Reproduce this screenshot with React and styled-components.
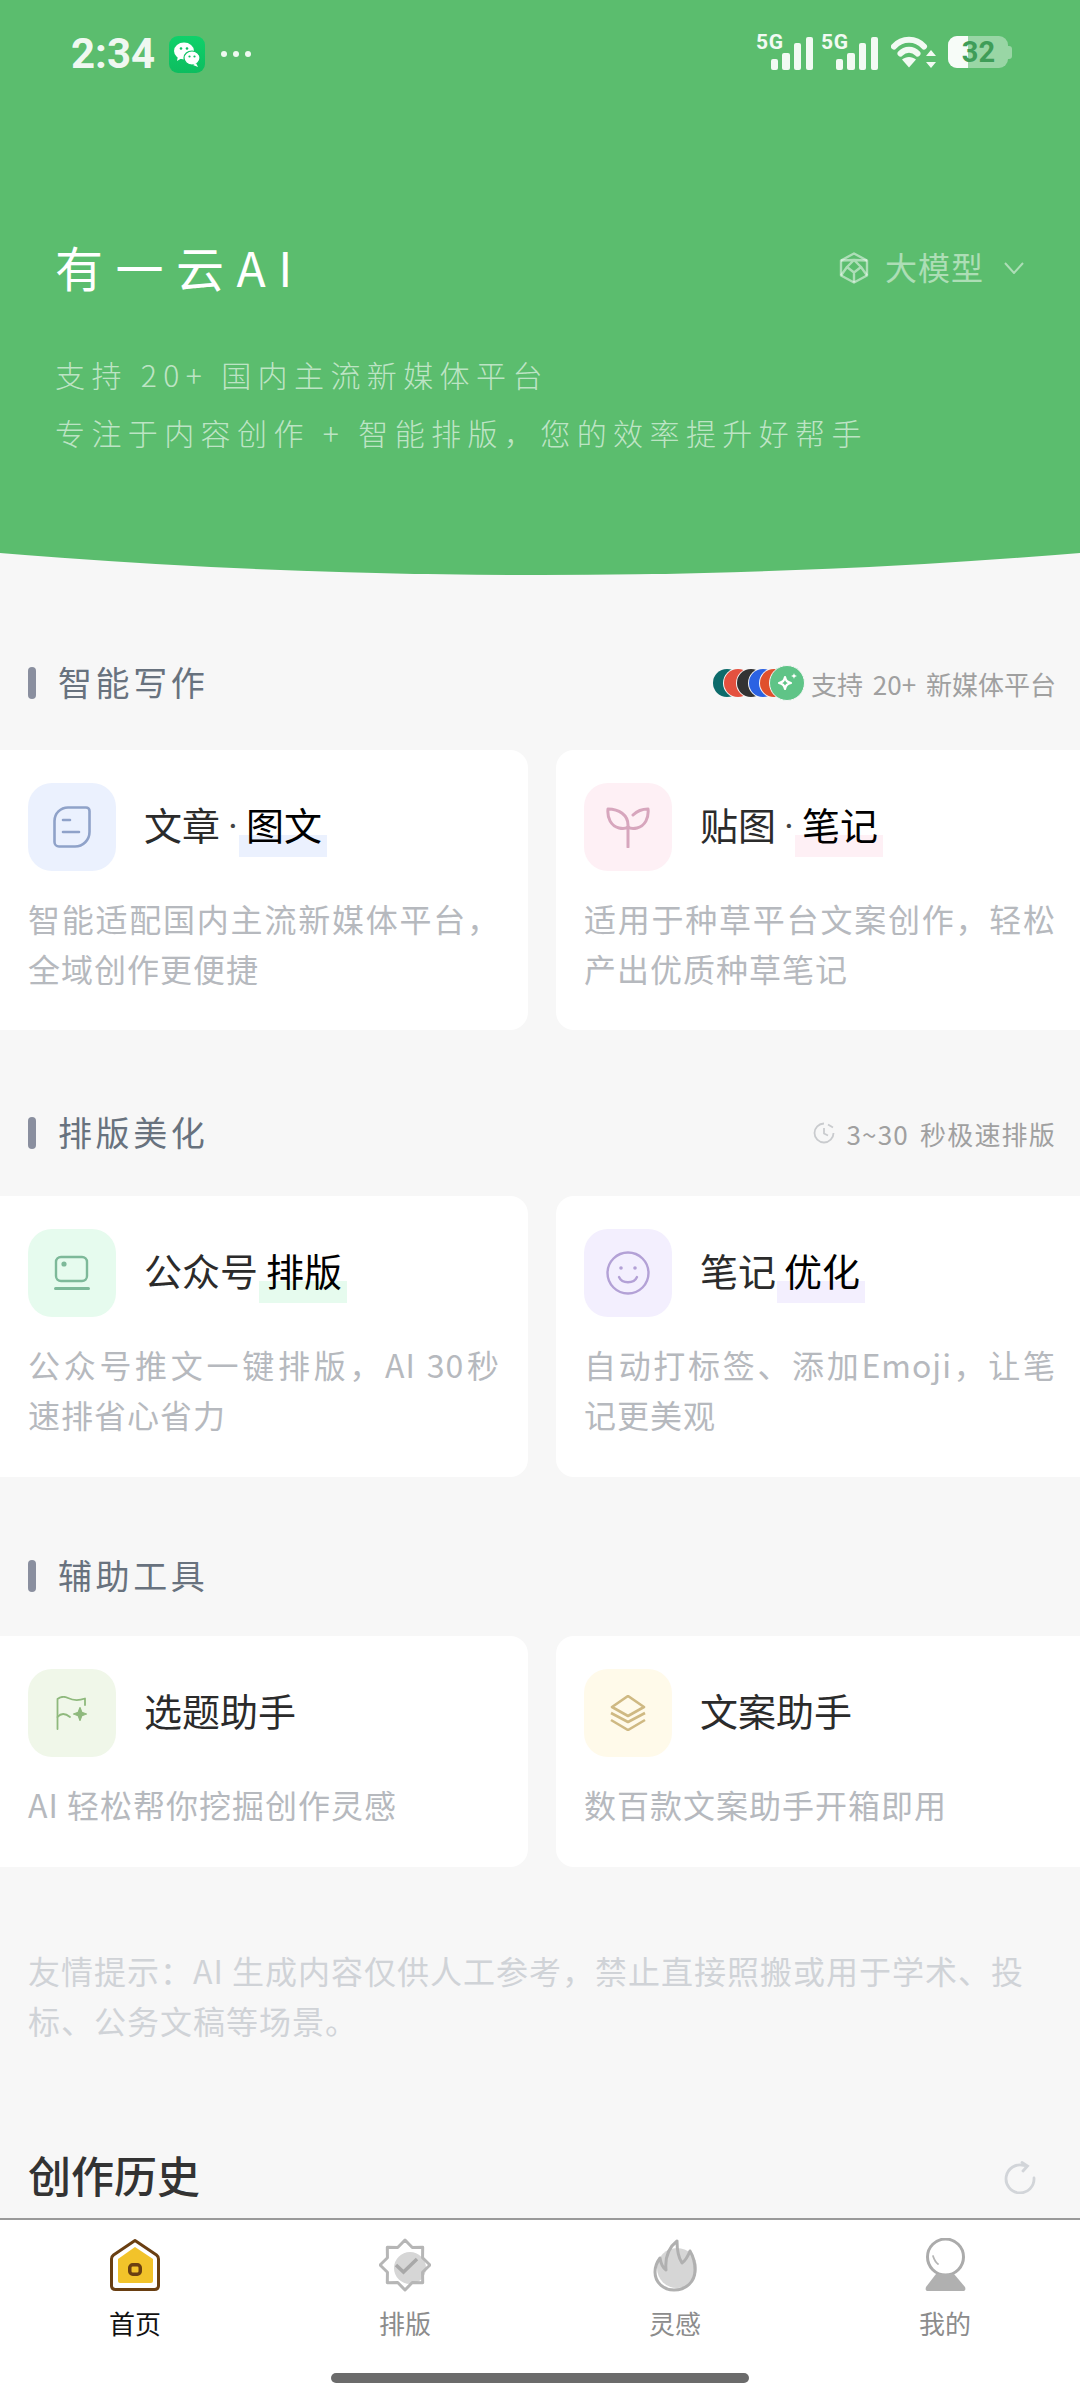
import React from "react";
import styled, { createGlobalStyle } from "styled-components";

const Global = createGlobalStyle`
  html, body { margin: 0; padding: 0; background: #f7f7f7; }
  * { box-sizing: border-box; }
`;

const FONT = `"Noto Sans CJK SC", "Noto Sans", sans-serif`;

const Page = styled.div`
  width: 1080px;
  height: 2400px;
  overflow: hidden;
  display: flex;
  flex-direction: column;
  background: #f7f7f7;
  font-family: ${FONT};
`;
const Scroll = styled.main`
  flex: 1;
  min-height: 0;
  overflow: hidden;
`;
const Hero = styled.header`
  height: 575px;
  background: #5bbd6e;
  clip-path: ellipse(1970px 575px at 50% 0);
  color: #fff;
`;
const StatusBar = styled.div`
  height: 108px;
  display: flex;
  align-items: center;
  padding: 0 68px 0 71px;
`;
const Time = styled.span`
  font-family: Roboto, sans-serif;
  font-size: 42px;
  font-weight: 700;
  line-height: 1;
  color: rgba(255, 255, 255, 0.92);
  margin-right: 14px;
`;
const AppBadge = styled.span`
  width: 36px;
  height: 37px;
  border-radius: 9px;
  background: linear-gradient(180deg, #0fd16a, #0dbd5f);
  display: flex;
  align-items: center;
  justify-content: center;
  margin-right: 16px;
`;
const Dots = styled.span`
  display: flex;
  gap: 6px;
  i {
    width: 6px;
    height: 6px;
    border-radius: 50%;
    background: rgba(255, 255, 255, 0.9);
  }
`;
const StatusRight = styled.div`
  margin-left: auto;
  margin-bottom: 4px;
  display: flex;
  align-items: center;
  gap: 7px;
`;
const SignalSvg = styled.svg`
  width: 58px;
  height: 44px;
  margin-top: -6px;
`;
const Battery = styled.span`
  position: relative;
  width: 60px;
  height: 32px;
  border-radius: 9px;
  background: rgba(255, 255, 255, 0.38);
  overflow: hidden;
  display: flex;
  align-items: center;
  justify-content: center;
  margin-left: 4px;
  font-family: Roboto, sans-serif;
  font-weight: 700;
  font-size: 29px;
  line-height: 1;
  color: #3f9d58;
  padding-left: 1px;
  &::before {
    content: "";
    position: absolute;
    left: 0;
    top: 0;
    bottom: 0;
    width: 20px;
    background: rgba(255, 255, 255, 0.92);
  }
  span { position: relative; }
`;
const BatteryNub = styled.span`
  width: 4px;
  height: 13px;
  border-radius: 0 3px 3px 0;
  background: rgba(255, 255, 255, 0.38);
  margin-left: -7px;
`;
const HeroRow = styled.div`
  margin-top: 130px;
  height: 60px;
  padding: 0 56px 0 55px;
  display: flex;
  align-items: center;
  justify-content: space-between;
`;
const Brand = styled.h1`
  margin: 0;
  font-size: 48px;
  line-height: 60px;
  padding-bottom: 4px;
  font-weight: 400;
  letter-spacing: 12.5px;
  color: #fff;
`;
const ModelPicker = styled.div`
  display: flex;
  align-items: center;
  font-size: 32px;
  font-weight: 400;
  letter-spacing: 1px;
  color: rgba(255, 255, 255, 0.5);
  span { padding-bottom: 4px; }
  svg:first-child { margin-right: 16px; }
  svg:last-child { margin-left: 20px; }
`;
const HeroSub = styled.p`
  margin: 47px 0 0;
  padding-left: 55px;
  font-size: 30px;
  line-height: 58px;
  font-weight: 300;
  letter-spacing: 6.4px;
  color: rgba(255, 255, 255, 0.62);
  white-space: nowrap;
`;

const SectionHead = styled.div`
  height: 40px;
  margin-top: ${(p) => p.$top}px;
  margin-bottom: ${(p) => p.$gap}px;
  padding: 0 24px 0 28px;
  display: flex;
  align-items: center;
`;
const Bar = styled.i`
  width: 8px;
  height: 32px;
  border-radius: 4px;
  background: #8a8f9f;
  margin-right: 22px;
`;
const SectionTitle = styled.h2`
  margin: 0;
  padding-bottom: 4px;
  font-size: 34px;
  font-weight: 400;
  letter-spacing: 3.6px;
  color: #68727e;
`;
const Meta = styled.div`
  margin-left: auto;
  display: flex;
  align-items: center;
  font-size: 26px;
  letter-spacing: ${(p) => p.$ls}px;
  word-spacing: 4px;
  color: #a0a0a0;
  white-space: nowrap;
`;
const Stack = styled.span`
  display: flex;
  align-items: center;
  margin-right: 6px;
`;
const Chip = styled.span`
  width: 28px;
  height: 28px;
  border-radius: 50%;
  background: ${(p) => p.$bg};
  margin-left: ${(p) => p.$shift}px;
  box-shadow: 0 0 0 1px #f7f7f7;
  color: #fff;
  display: flex;
  align-items: center;
  justify-content: flex-end;
  padding-right: 3px;
  &::after {
    content: "";
    width: 4px;
    height: 13px;
    border-left: 2px solid rgba(255, 255, 255, 0.85);
  }
`;
const LeadChip = styled.span`
  position: relative;
  width: 36px;
  height: 36px;
  border-radius: 50%;
  background: #5fc487;
  border: 1px solid #f7f7f7;
  margin-left: -19px;
  display: flex;
  align-items: center;
  justify-content: center;
`;
const Row = styled.div`
  display: grid;
  grid-template-columns: 528px 552px;
  column-gap: 28px;
  width: 1108px;
`;
const Card = styled.article`
  background: #fff;
  padding: 33px 28px 0;
  height: ${(p) => p.$h}px;
  border-radius: ${(p) => (p.$right ? "18px 0 0 18px" : "0 18px 18px 0")};
`;
const CardHead = styled.div`
  display: flex;
  align-items: center;
  gap: 28px;
  margin-bottom: 22px;
`;
const IconBox = styled.div`
  width: 88px;
  height: 88px;
  flex: none;
  border-radius: 24px;
  background: ${(p) => p.$bg};
  display: flex;
  align-items: center;
  justify-content: center;
`;
const CardTitle = styled.h3`
  margin: 0;
  padding-bottom: 6px;
  font-size: 38px;
  line-height: 50px;
  font-weight: 400;
  color: #2b2b2b;
  white-space: nowrap;
  display: flex;
  align-items: center;
`;
const Mark = styled.span`
  position: relative;
  color: #000;
  z-index: 0;
  margin-left: ${(p) => p.$ml}px;
  &::after {
    content: "";
    position: absolute;
    z-index: -1;
    left: -7px;
    right: -5px;
    bottom: -8px;
    height: 22px;
    background: ${(p) => p.$bg};
  }
`;
const Dot = styled.span`
  width: 26px;
  padding-top: 6px;
  text-align: center;
  font-family: Roboto, sans-serif;
  font-size: 38px;
  line-height: 44px;
  color: #444;
`;
const Desc = styled.p`
  margin: 0;
  width: 472px;
  font-size: 32px;
  line-height: 50px;
  font-weight: 400;
  letter-spacing: 1px;
  text-align: justify;
  color: #b6b9be;
`;
const Notice = styled.p`
  margin: 78px 0 102px 28px;
  width: 996px;
  font-size: 32px;
  line-height: 50px;
  letter-spacing: 1px;
  text-align: justify;
  color: #d0d3d7;
`;
const HistoryHead = styled.div`
  height: 60px;
  padding: 0 44px 0 28px;
  display: flex;
  align-items: center;
  justify-content: space-between;
`;
const HistoryTitle = styled.h2`
  margin: 0;
  padding-bottom: 6px;
  font-size: 43px;
  font-weight: 500;
  color: #333;
`;
const TabBar = styled.nav`
  position: relative;
  height: 182px;
  flex: none;
  background: #fff;
  border-top: 2px solid #9a9a9a;
  display: grid;
  grid-template-columns: repeat(4, 270px);
  align-items: start;
`;
const Tab = styled.div`
  display: flex;
  flex-direction: column;
  align-items: center;
  padding-top: 18px;
  font-size: 26px;
  line-height: 36px;
  color: ${(p) => (p.$on ? "#111" : "#8c8c8c")};
  svg { margin-bottom: 13px; }
`;
const HomeLine = styled.i`
  position: absolute;
  left: 331px;
  bottom: 17px;
  width: 418px;
  height: 10px;
  border-radius: 5px;
  background: #6b6b6b;
`;

const Signal = () => (
  <SignalSvg viewBox="0 -6 58 44">
    <text x="0" y="15.500" fontFamily="Roboto, sans-serif" fontWeight="700" fontSize="21" fill="#f2faf3" textLength="27">5G</text>
    <g fill="#f2faf3">
      <rect x="15" y="26" width="7" height="11" rx="2" />
      <rect x="26" y="20" width="8" height="17" rx="2" />
      <rect x="38" y="10" width="7" height="27" rx="2" />
      <rect x="50" y="4" width="7" height="33" rx="2" />
    </g>
  </SignalSvg>
);
const Wifi = () => (
  <svg width="46" height="34" viewBox="0 0 46 34" fill="none" style={{ marginLeft: 5 }}>
    <path d="M3 11.500C11 2.500 25 2.500 33 11.500" stroke="#f2faf3" strokeWidth="6" strokeLinecap="round" />
    <path d="M9.500 18.500C14 13.500 22 13.500 26.500 18.500" stroke="#f2faf3" strokeWidth="6" strokeLinecap="round" />
    <path d="M11 24.500C15 21 21 21 25 24.500L18 32.500Z" fill="#f2faf3" />
    <path d="M40 15l5 6h-10zM40 33l5-6h-10z" fill="#f2faf3" />
  </svg>
);
const WeChat = () => (
  <svg width="28" height="28" viewBox="0 0 28 28">
    <ellipse cx="11" cy="11" rx="10" ry="8.500" fill="#fff" />
    <path d="M5 16l-1 5 5-3z" fill="#fff" />
    <ellipse cx="19" cy="18" rx="8" ry="7" fill="#fff" stroke="#0dc263" strokeWidth="1.200" />
    <path d="M23 23l2 4-5-2z" fill="#fff" />
    <circle cx="8" cy="8.500" r="1.300" fill="#0dc263" />
    <circle cx="14" cy="8.500" r="1.300" fill="#0dc263" />
    <circle cx="16.500" cy="16.500" r="1.100" fill="#0dc263" />
    <circle cx="21.500" cy="16.500" r="1.100" fill="#0dc263" />
  </svg>
);
const Hex = () => (
  <svg width="30" height="32" viewBox="0 0 30 32" fill="none" stroke="rgba(255,255,255,.5)" strokeWidth="2.400" strokeLinejoin="round">
    <path d="M15 1.500 28 8.500v15L15 30.500 2 23.500v-15z" />
    <path d="M15 8 8 15l7 5.500 7-5.500zM15 20.500v10M2 23.500 8 15M28 23.500 22 15M2 8.500 15 8M28 8.500 15 8" />
  </svg>
);
const Chevron = () => (
  <svg width="20" height="12" viewBox="0 0 20 12" fill="none" stroke="rgba(255,255,255,.5)" strokeWidth="2">
    <path d="M1 1l9 10 9-10" />
  </svg>
);
const Sparkle = () => (
  <svg width="24" height="24" viewBox="0 0 24 24" fill="none">
    <path d="M10 6c1 4 2 5 6 6-4 1-5 2-6 6-1-4-2-5-6-6 4-1 5-2 6-6z" stroke="#fff" strokeWidth="2.200" strokeLinejoin="round" />
    <path d="M19 2c.4 1.800 1 2.400 3 3-2 .6-2.600 1.200-3 3-.4-1.800-1-2.400-3-3 2-.6 2.600-1.200 3-3z" fill="#fff" />
  </svg>
);
const Clock = () => (
  <svg width="22" height="22" viewBox="0 0 22 22" fill="none" stroke="#c9cbce" strokeWidth="1.800" style={{ marginRight: 11 }}>
    <path d="M11 1.500a9.500 9.500 0 1 0 9.500 9.500" />
    <path d="M11 6v5.500l4 2M15 2.500l5 3" />
  </svg>
);
const Doc = () => (
  <svg width="38" height="42" viewBox="0 0 38 42" fill="none" stroke="#8fa2c9" strokeWidth="2.600" strokeLinecap="round" strokeLinejoin="round">
    <path d="M15 1.500H33c2 0 3.500 1.500 3.500 3.500V26C36.500 34 30 40.500 22 40.500H6c-2.500 0-4.500-2-4.500-4.500V15C1.500 7.500 7.500 1.500 15 1.500z" />
    <path d="M10 14h7M10 26h16" />
  </svg>
);
const Sprout = () => (
  <svg width="44" height="42" viewBox="0 0 44 42" fill="none" stroke="#d7a6bd" strokeWidth="3" strokeLinecap="round" strokeLinejoin="round">
    <path d="M22 41V19C22 9 13 3 2 3c-1 9 3 17 11 19 4 1 7 .5 9-1" />
    <path d="M22 21c2 1.500 5 2 9 1 8-2 12-10 11-19-6 0-11 2-15 6" />
  </svg>
);
const Screen = () => (
  <svg width="36" height="36" viewBox="0 0 36 36" fill="none" stroke="#7db999" strokeWidth="2.400" strokeLinecap="round">
    <rect x="2" y="2" width="31" height="24" rx="5" />
    <circle cx="10" cy="9" r="1.400" fill="#7db999" />
    <path d="M1.500 33.500h33" strokeWidth="3" />
  </svg>
);
const Smile = () => (
  <svg width="44" height="44" viewBox="0 0 44 44" fill="none" stroke="#b3a1d6" strokeWidth="2.400" strokeLinecap="round">
    <circle cx="22" cy="22" r="20.500" />
    <circle cx="15" cy="17" r="1.800" fill="#b3a1d6" stroke="none" />
    <circle cx="29" cy="17" r="1.800" fill="#b3a1d6" stroke="none" />
    <path d="M13 26c3 7 15 7 18 0" />
  </svg>
);
const Flag = () => (
  <svg width="32" height="34" viewBox="0 0 32 34" fill="none" stroke="#8fb97d" strokeWidth="1.800" strokeLinecap="round" strokeLinejoin="round">
    <path d="M1.500 33V3C6-.5 9 .5 12 2c4 2 10 3 17 .5V9" />
    <path d="M1.500 21c3.500-4 7.500-4 12.500 0" />
    <path d="M24 11.500l1.800 4.700 4.700 1.800-4.700 1.800L24 24.500l-1.800-4.700-4.700-1.800 4.700-1.800z" fill="#8fb97d" stroke="#8fb97d" strokeWidth="1.200" />
  </svg>
);
const Layers = () => (
  <svg width="40" height="36" viewBox="0 0 40 36" fill="none" stroke="#cfb983" strokeWidth="2.600" strokeLinejoin="round">
    <path d="M20 2l16 11-16 9-16-9z" transform="translate(0 -1)" />
    <path d="M3 18l17 9 17-9M3 25l17 10 17-10" />
  </svg>
);
const Refresh = () => (
  <svg width="33" height="33" viewBox="0 0 33 33" fill="none" stroke="#d2d5d9" strokeWidth="2.800" strokeLinecap="round">
    <path d="M21 4.500A14 14 0 1 0 31 17" />
    <path d="M19 1.500 24.500 5 20 10" />
  </svg>
);
const HomeIcon = () => (
  <svg width="52" height="54" viewBox="0 0 52 54">
    <path d="M26 2.500 47.500 17Q49.500 18.500 49.500 21V47.500Q49.500 51.500 45.500 51.500H6.500Q2.500 51.500 2.500 47.500V21Q2.500 18.500 4.500 17Z" fill="#fff" stroke="#6a3f12" strokeWidth="3" strokeLinejoin="round" />
    <path d="M26 9 44 21V43Q44 45 42 45H11Q9 45 9 43V21Z" fill="#f2c32a" />
    <rect x="20.750" y="26.750" width="10.500" height="9.500" rx="3" fill="none" stroke="#6a3f12" strokeWidth="3.500" />
  </svg>
);
const BadgeIcon = () => (
  <svg width="52" height="54" viewBox="0 0 52 54">
    <circle cx="31" cy="30" r="16" fill="#d6d6d6" />
    <path d="M26 1 33.300 8.450 43.700 8.300 43.550 18.700 51 26 43.550 33.300 43.700 43.700 33.300 43.550 26 51 18.700 43.550 8.300 43.700 8.450 33.300 1 26 8.450 18.700 8.300 8.300 18.700 8.450Z" fill="none" stroke="#b6b6b6" strokeWidth="3" strokeLinejoin="round" transform="translate(0 1)" />
    <path d="M17 27l7.500 7L38 21" fill="none" stroke="#a8a8a8" strokeWidth="3.500" />
  </svg>
);
const FlameIcon = () => (
  <svg width="44" height="54" viewBox="0 0 44 54">
    <circle cx="24" cy="30" r="20" fill="#d6d6d6" />
    <path d="M24 3C24 11 25 19 29 25C32 23 35 18 37 13C40 18 42 25 42 32C42 44 33 52 21 52C10 52 2 44 2 34C2 29 4 24 7 20C8 26 10 30 13 32C12 21 15 10 24 3Z" fill="none" stroke="#b0b0b0" strokeWidth="3" strokeLinejoin="round" />
  </svg>
);
const UserIcon = () => (
  <svg width="41" height="54" viewBox="0 0 41 54">
    <circle cx="20.500" cy="19" r="18" fill="#fff" stroke="#ababab" strokeWidth="3" />
    <path d="M8 18c1 3 2 6 5 8" stroke="#b5b5b5" strokeWidth="1.800" fill="none" strokeLinecap="round" />
    <path d="M11 36h18l11 13c1 3 0 4-3 4H4c-3 0-4-1-3-4z" fill="#b0b0b0" />
  </svg>
);

const chips = [
  ["#0d6b6b", 0],
  ["#e4513f", -17],
  ["#333333", -15],
  ["#2b62e3", -16],
  ["#e0502d", -17],
];

const CardItem = ({ right, h, bg, icon, plain, sep, mark, ml, desc }) => (
  <Card $right={right} $h={h}>
    <CardHead>
      <IconBox $bg={bg}>{icon}</IconBox>
      <CardTitle>
        {plain}
        {sep ? <Dot>·</Dot> : null}
        {mark ? <Mark $bg={bg} $ml={ml}>{mark}</Mark> : null}
      </CardTitle>
    </CardHead>
    <Desc>{desc}</Desc>
  </Card>
);

export default function App() {
  return (
    <Page>
      <Global />
      <Scroll>
        <Hero>
          <StatusBar>
            <Time>2:34</Time>
            <AppBadge><WeChat /></AppBadge>
            <Dots><i /><i /><i /></Dots>
            <StatusRight>
              <Signal />
              <Signal />
              <Wifi />
              <Battery><span>32</span></Battery>
              <BatteryNub />
            </StatusRight>
          </StatusBar>
          <HeroRow>
            <Brand>有一云AI</Brand>
            <ModelPicker>
              <Hex />
              <span>大模型</span>
              <Chevron />
            </ModelPicker>
          </HeroRow>
          <HeroSub>
            支持 20+ 国内主流新媒体平台
            <br />
            专注于内容创作 + 智能排版，您的效率提升好帮手
          </HeroSub>
        </Hero>

        <SectionHead $top={88} $gap={47}>
          <Bar />
          <SectionTitle>智能写作</SectionTitle>
          <Meta $ls={0}>
            <Stack>
              {chips.map(([c, s]) => (
                <Chip key={c} $bg={c} $shift={s} />
              ))}
              <LeadChip><Sparkle /></LeadChip>
            </Stack>
            支持 20+ 新媒体平台
          </Meta>
        </SectionHead>
        <Row>
          <CardItem h={280} bg="#ebf1fe" icon={<Doc />} plain="文章" sep mark="图文" ml={0} desc="智能适配国内主流新媒体平台，全域创作更便捷" />
          <CardItem right h={280} bg="#fef0f5" icon={<Sprout />} plain="贴图" sep mark="笔记" ml={0} desc="适用于种草平台文案创作，轻松产出优质种草笔记" />
        </Row>

        <SectionHead $top={83} $gap={43}>
          <Bar />
          <SectionTitle>排版美化</SectionTitle>
          <Meta $ls={1.2}>
            <Clock />
            3~30 秒极速排版
          </Meta>
        </SectionHead>
        <Row>
          <CardItem h={281} bg="#e6fbee" icon={<Screen />} plain="公众号" mark="排版" ml={8} desc="公众号推文一键排版，AI 30秒速排省心省力" />
          <CardItem right h={281} bg="#f3effe" icon={<Smile />} plain="笔记" mark="优化" ml={8} desc="自动打标签、添加Emoji，让笔记更美观" />
        </Row>

        <SectionHead $top={79} $gap={40}>
          <Bar />
          <SectionTitle>辅助工具</SectionTitle>
        </SectionHead>
        <Row>
          <CardItem h={231} bg="#f0f7e9" icon={<Flag />} plain="选题助手" desc="AI 轻松帮你挖掘创作灵感" />
          <CardItem right h={231} bg="#fffaea" icon={<Layers />} plain="文案助手" desc="数百款文案助手开箱即用" />
        </Row>

        <Notice>友情提示：AI 生成内容仅供人工参考，禁止直接照搬或用于学术、投标、公务文稿等场景。</Notice>

        <HistoryHead>
          <HistoryTitle>创作历史</HistoryTitle>
          <Refresh />
        </HistoryHead>
      </Scroll>
      <TabBar>
        <Tab $on><HomeIcon />首页</Tab>
        <Tab><BadgeIcon />排版</Tab>
        <Tab><FlameIcon />灵感</Tab>
        <Tab><UserIcon />我的</Tab>
        <HomeLine />
      </TabBar>
    </Page>
  );
}
